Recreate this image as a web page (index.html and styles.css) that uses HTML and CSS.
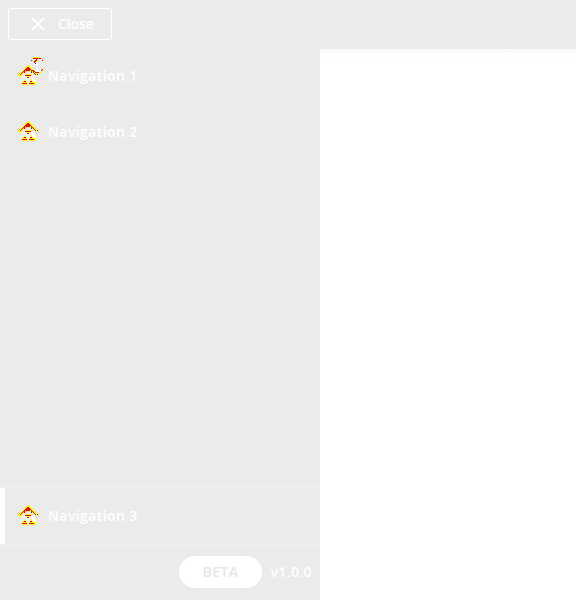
FILE: index.html
```html
<!DOCTYPE html>
<html lang="en">
<head>
<meta charset="utf-8">
<title>Navigation</title>
<link rel="stylesheet" href="styles.css">
</head>
<body>
<svg width="0" height="0" class="defs">
  <symbol id="house" viewBox="0 0 20 20">
    <path fill="#fff" d="M3 10h4v7H3zM13 10h4v7h-4zM7 11h6v2H7zM8 13h4v4H8zM9 17h2v3H9z"/>
    <path fill="#ff0" d="M9 0h2v1H9zM8 1h4v1H8zM7 2h6v1H7zM6 3h8v1H6zM5 4h10v1H5zM4 5h12v1H4zM3 6h5v1H3zM12 6h5v1H12zM2 7h4v1H2zM14 7h4v1H14zM1 8h4v1H1zM15 8h4v1H15zM0 9h3v1H0zM7 9h6v1H7zM17 9h3v1H17zM0 10h3v1H0zM7 10h6v1H7zM17 10h2v1H17zM1 11h2v1H1zM8 11h4v1H8zM17 11h1v1H17zM9 12h2v1H9zM7 14h1v1H7zM12 14h1v1H12zM6 15h2v1H6zM12 15h2v1H12zM4 16h4v1H4zM12 16h4v1H12zM3 17h6v3H3zM11 17h6v3H11z"/>
    <path fill="red" d="M9 2h2v1H9zM8 3h4v1H8zM7 4h6v1H7zM6 5h2v1H6zM8 5h4v1H8zM13 5h1v1H13zM5 6h2v1H5zM13 6h2v1H13zM4 7h1v1H4zM6 7h1v1H6zM13 7h1v1H13zM15 7h1v1H15zM3 8h1v1H3zM16 8h1v1H16zM2 9h1v1H2zM17 9h1v1H17zM19 9h1v1H19zM7 10h6v1H7zM9 12h2v1H9zM6 16h2v1H6zM12 16h2v1H12zM4 18h5v1H4zM11 18h5v1H11z"/>
  </symbol>
</svg>
<header class="topbar">
  <button class="close">
    <svg width="14" height="14" viewBox="0 0 14 14"><path d="M1 1l12 12M13 1L1 13" stroke="#fff" stroke-width="2"/></svg>
    <span>Close</span>
  </button>
</header>
<div class="body">
  <nav class="sidebar">
    <a class="item">
      <span class="icon">
        <svg width="20" height="20"><use href="#house"/></svg>
        <svg class="badge" width="14" height="17" viewBox="0 0 14 17">
          <path fill="#fff" d="M5 2h4v1H5zM6 3h2v11H6zM7 14h2v1H7z"/>
          <path fill="#ff0" d="M4 0h6v1H4zM2 1h10v1H2zM1 2h1v1H1zM5 2h3v1H5zM4 3h3v1H4zM4 4h3v1H4zM3 5h3v1H3zM13 12h1v1H13zM0 13h1v1H0zM12 13h1v1H12zM2 14h3v1H2zM11 14h1v1H11zM4 15h7v1H4z"/>
          <path fill="red" d="M3 1h8v1H3zM1 3h1v1H1zM12 3h1v1H12zM6 2h1v1H6zM5 3h2v1H5zM4 4h2v1H4zM4 5h1v1H4zM5 6h1v1H5zM12 12h1v1H12zM2 13h2v1H2zM11 13h1v1H11zM3 14h2v1H3zM5 15h4v1H5z"/>
        </svg>
      </span>
      <span>Navigation 1</span>
    </a>
    <a class="item">
      <span class="icon"><svg width="20" height="20"><use href="#house"/></svg></span>
      <span>Navigation 2</span>
    </a>
    <a class="item active">
      <span class="icon"><svg width="20" height="20"><use href="#house"/></svg></span>
      <span>Navigation 3</span>
    </a>
    <footer class="footer"><span class="beta">BETA</span><span>v1.0.0</span></footer>
  </nav>
  <main class="content"></main>
</div>
</body>
</html>
```
FILE: styles.css
```css
* { box-sizing: border-box; }
body {
  margin: 0;
  height: 600px;
  display: flex;
  flex-direction: column;
  overflow: hidden;
  background: #fff;
  color: #fff;
  font: 600 14px/20px "Open Sans", sans-serif;
}
.defs { position: absolute; }
svg { display: block; shape-rendering: crispEdges; }
.topbar { height: 48px; padding: 8px; background: #ebebeb; }
.close {
  width: 104px;
  height: 32px;
  padding: 0 0 0 22px;
  display: flex;
  align-items: center;
  gap: 13px;
  border: 1px solid #fff;
  border-radius: 2px;
  background: none;
  color: #fff;
  font: inherit;
  font-size: 14px;
  letter-spacing: -.1px;
}
.close svg { shape-rendering: auto; }
.body { flex: 1; display: flex; }
.sidebar { width: 320px; display: flex; flex-direction: column; background: #ebebeb; }
.item {
  height: 56px;
  padding-left: 18px;
  display: flex;
  align-items: center;
  gap: 10px;
  letter-spacing: .4px;
}
.icon { position: relative; padding-bottom: 2px; }
.icon svg { overflow: visible; }
.icon .badge { position: absolute; left: 12px; top: -8px; }
.active {
  position: relative;
  height: 58px;
  margin-top: auto;
  border-top: 1px solid #f0f0f0;
  border-bottom: 1px solid #f0f0f0;
}
.active::before {
  content: "";
  position: absolute;
  left: 0;
  top: 0;
  width: 5px;
  height: 56px;
  background: #fff;
}
.footer {
  height: 55px;
  padding: 0 8px 2px 0;
  display: flex;
  align-items: center;
  justify-content: flex-end;
  gap: 8px;
  letter-spacing: .4px;
}
.beta {
  width: 83px;
  height: 32px;
  padding-right: 1px;
  border-radius: 16px;
  background: #fff;
  color: #e6e6e6;
  line-height: 32px;
  text-align: center;
}
.content { flex: 1; border-top: 1px solid #ebebeb; background: linear-gradient(#fafafa, #fff 8px); }
```
